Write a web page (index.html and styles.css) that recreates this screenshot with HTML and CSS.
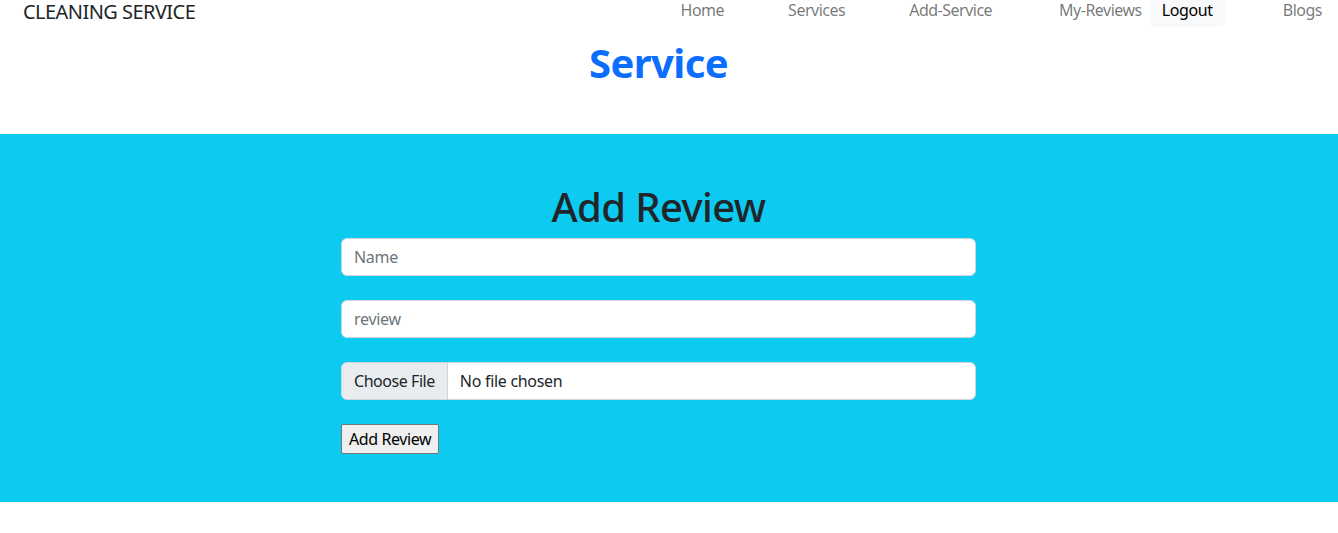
FILE: index.html
```html
<!DOCTYPE html>
<html lang="en">
<head>
<meta charset="utf-8">
<title>Cleaning Service - Add Review</title>
<link rel="stylesheet" href="styles.css">
</head>
<body>
<nav class="navbar">
  <a class="brand" href="#">CLEANING SERVICE</a>
  <div class="nav-links">
    <a class="nav-link" href="#">Home</a>
    <a class="nav-link" href="#">Services</a>
    <a class="nav-link" href="#">Add-Service</a>
    <a class="nav-link wide-gap" href="#">My-Reviews</a>
    <button class="logout" type="button">Logout</button>
    <a class="nav-link" href="#">Blogs</a>
  </div>
</nav>
<main class="page">
  <h1 class="page-title">Service</h1>
</main>
<section class="band">
  <div class="band-inner">
    <h1 class="band-title">Add Review</h1>
    <form class="review-form">
      <input class="field" type="text" placeholder="Name">
      <input class="field" type="text" placeholder="review">
      <input class="field file" type="file">
      <button class="submit" type="submit">Add Review</button>
    </form>
  </div>
</section>
</body>
</html>
```
FILE: styles.css
```css
* { box-sizing: border-box; }
html, body { margin: 0; padding: 0; background: #fff; }
body {
  font-family: "Noto Sans", "Open Sans", sans-serif;
  font-size: 16px;
  line-height: 1.5;
  color: #212529;
}
.navbar {
  display: flex;
  justify-content: space-between;
  align-items: flex-start;
  height: 28px;
  padding: 0 16px 0 23px;
}
.brand {
  font-size: 20px;
  line-height: 23px;
  padding-right: 4px;
  color: #212529;
  text-decoration: none;
  letter-spacing: -0.55px;
}
.nav-links {
  display: flex;
  align-items: flex-start;
}
.nav-link {
  color: rgba(0, 0, 0, 0.55);
  text-decoration: none;
  line-height: 21px;
  margin-left: 64px;
  letter-spacing: -0.5px;
}
.nav-link:first-child { margin-left: 0; }
.nav-link.wide-gap { margin-left: 67px; }
.logout + .nav-link { margin-left: 58px; }
.logout {
  margin-left: 8px;
  width: 75px;
  height: 27px;
  padding: 0 0 6px;
  border: 0;
  border-radius: 0 0 6px 6px;
  background: #f8f9fa;
  color: #000;
  font: inherit;
  line-height: 21px;
  letter-spacing: -0.4px;
}
.page { padding-right: 21px; }
.page-title {
  margin: 11px 0 47px;
  text-align: center;
  font-size: 40px;
  line-height: 48px;
  font-weight: 700;
  color: #0d6efd;
  letter-spacing: -0.6px;
}
.band {
  background: #0dcaf0;
  padding: 48px 21px 48px 0;
}
.band-inner {
  width: 635px;
  margin: 0 auto;
}
.band-title {
  margin: 0 0 8px;
  padding-top: 1px;
  height: 48px;
  text-align: center;
  font-size: 40px;
  line-height: 48px;
  font-weight: 500;
  color: #212529;
  letter-spacing: -0.6px;
}
.review-form {
  display: flex;
  flex-direction: column;
  align-items: flex-start;
  gap: 24px;
}
.field {
  width: 100%;
  height: 38px;
  padding: 6px 12px;
  border: 1px solid #ced4da;
  border-radius: 6px;
  background: #fff;
  font: inherit;
  line-height: 24px;
  color: #212529;
  letter-spacing: -0.3px;
}
.field::placeholder { color: #6c757d; opacity: 1; }
.field.file { overflow: hidden; }
.field.file::file-selector-button {
  height: 38px;
  padding: 6px 12px;
  margin: -7px 12px -7px -12px;
  border: 0;
  border-right: 1px solid #ced4da;
  border-radius: 0;
  background: #e9ecef;
  color: #212529;
  font: inherit;
  letter-spacing: -0.45px;
}
.submit {
  height: 30px;
  padding: 2px 7px;
  border: 1px solid #767676;
  border-radius: 2px;
  background: #efefef;
  color: #000;
  font: inherit;
  line-height: 24px;
  letter-spacing: -0.4px;
}
```
